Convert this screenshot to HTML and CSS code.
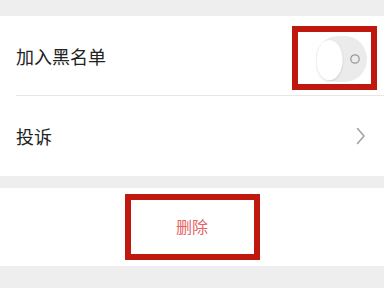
FILE: index.html
```html
<!DOCTYPE html>
<html lang="zh">
<head>
<meta charset="utf-8">
<link rel="stylesheet" href="styles.css">
</head>
<body>
<div class="page">
  <section class="group">
    <div class="row row-divided">
      <span class="label">加入黑名单</span>
      <div class="mark mark-toggle">
        <svg class="toggle" width="51" height="48" viewBox="0 0 51 48">
          <defs>
            <filter id="sh" x="-30%" y="-30%" width="160%" height="160%">
              <feDropShadow dx="0" dy="1" stdDeviation="1.2" flood-color="#000" flood-opacity="0.18"/>
            </filter>
          </defs>
          <rect x="0" y="1" width="51" height="46" rx="22" ry="23" fill="#ebebeb"/>
          <ellipse cx="13.5" cy="25" rx="13" ry="20" fill="#fff" filter="url(#sh)"/>
          <circle cx="39" cy="24" r="4.2" fill="none" stroke="#9a9a9a" stroke-width="1.3"/>
        </svg>
      </div>
    </div>
    <div class="row">
      <span class="label">投诉</span>
      <svg class="chev" width="10" height="18" viewBox="0 0 10 18">
        <path d="M1.5 1.5 L8 9 L1.5 16.5" fill="none" stroke="#a0a0a0" stroke-width="1.5" stroke-linecap="round" stroke-linejoin="round"/>
      </svg>
    </div>
  </section>
  <section class="group group-delete">
    <div class="mark mark-delete">
      <span class="delete">删除</span>
    </div>
  </section>
</div>
</body>
</html>
```
FILE: styles.css
```css
html, body {
  margin: 0;
  padding: 0;
}
body {
  background: #eeeeee;
  font-family: "Noto Sans CJK SC", "Noto Sans", sans-serif;
  width: 384px;
  height: 288px;
  overflow: hidden;
}
.page {
  padding-top: 16px;
  display: flex;
  flex-direction: column;
  gap: 12px;
}
.group {
  background: #ffffff;
}
.row {
  display: flex;
  align-items: center;
  justify-content: space-between;
  height: 80px;
  padding-left: 16px;
  box-sizing: border-box;
}
.row-divided {
  height: 80px;
  margin-left: 16px;
  padding-left: 0;
  border-bottom: 1px solid #e6e6e6;
}
.label {
  font-size: 18px;
  color: #222222;
  line-height: 1;
}
.mark {
  border: 6px solid #c0180f;
  box-sizing: border-box;
}
.mark-toggle {
  width: 85px;
  height: 64px;
  margin-right: 7px;
  margin-top: 5px;
  display: flex;
  align-items: center;
  justify-content: flex-end;
  padding-right: 4px;
}
.toggle {
  display: block;
  margin-top: 2px;
}
.chev {
  display: block;
  margin-right: 18px;
}
.group-delete {
  height: 78px;
  display: flex;
  align-items: center;
  justify-content: center;
}
.mark-delete {
  width: 135px;
  height: 66px;
  display: flex;
  align-items: center;
  justify-content: center;
}
.delete {
  font-size: 16px;
  color: #e46464;
  line-height: 1;
  margin-top: -2px;
}
```
